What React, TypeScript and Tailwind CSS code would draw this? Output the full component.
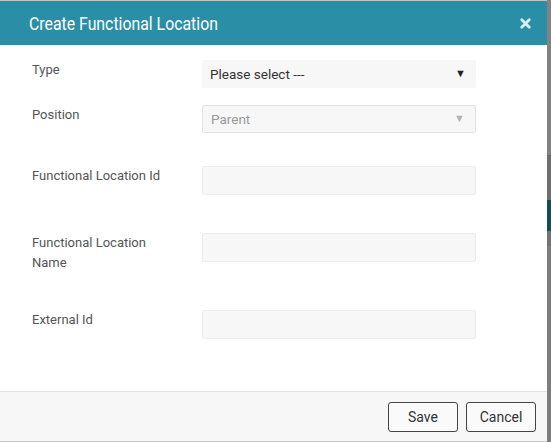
import { X } from 'lucide-react'

interface FieldRowProps {
    label: string
    height: string
    children: React.ReactNode
}

function FieldRow({ label, height, children }: FieldRowProps) {
    return (
        <div className={`flex items-start ${height}`}>
            <div className="w-[202px] shrink-0 pl-8 pr-[26px] text-[13px] leading-5 text-[#555]">{label}</div>
            <div className="w-[274px]">{children}</div>
        </div>
    )
}

function TextBox() {
    return <div className="h-[29px] rounded-[2px] border border-[#ededed] bg-[#f7f7f7]" />
}

export default function App() {
    return (
        <div className="flex h-[442px] w-[551px] bg-[#7d7d7d] font-['Roboto','Liberation_Sans',sans-serif]">
            {/* dialog */}
            <div className="flex w-[547px] shrink-0 flex-col border-t border-b border-[#c4c4c4] bg-white">
                <div className="flex h-[44px] shrink-0 items-center justify-between bg-[#2a8fa6] pl-[29px] pr-[14px]">
                    <h1 className="origin-left scale-x-[0.88] whitespace-nowrap text-[18px] text-white">Create Functional Location</h1>
                    <X className="h-[15px] w-[15px] text-[#d9eef2]" strokeWidth={4.5} />
                </div>

                <div className="flex-1 pt-[15px]">
                    <FieldRow label="Type" height="h-[45px]">
                        <div className="flex h-[28px] items-center justify-between rounded-[2px] bg-[#f7f7f7] pl-2 pr-[10px] text-[13.5px] text-[#333]">
                            <span>Please select ---</span>
                            <span className="text-[11px] text-[#222]">▼</span>
                        </div>
                    </FieldRow>
                    <FieldRow label="Position" height="h-[61px]">
                        <div className="flex h-[28px] items-center justify-between rounded-[2px] border border-[#e3e3e3] bg-[#f7f7f7] pl-2 pr-[10px] text-[13.5px] text-[#9a9a9a]">
                            <span>Parent</span>
                            <span className="text-[11px] text-[#b3b3b3]">▼</span>
                        </div>
                    </FieldRow>
                    <FieldRow label="Functional Location Id" height="h-[67px]">
                        <TextBox />
                    </FieldRow>
                    <FieldRow label="Functional Location Name" height="h-[77px]">
                        <TextBox />
                    </FieldRow>
                    <FieldRow label="External Id" height="h-[28px]">
                        <TextBox />
                    </FieldRow>
                </div>

                <div className="flex h-[50px] shrink-0 items-start justify-end gap-2 border-t border-[#e3e3e3] bg-[#f7f7f7] pt-[10px] pr-[11px]">
                    <button className="h-[30px] w-[70px] rounded-[3px] border border-[#444] bg-[#fafafa] text-[14px] text-[#333]">Save</button>
                    <button className="h-[30px] w-[70px] rounded-[3px] border border-[#444] bg-[#fafafa] text-[14px] text-[#333]">Cancel</button>
                </div>
            </div>

            {/* page behind the dialog */}
            <div className="flex flex-1 flex-col">
                <div className="h-[155px] bg-[#828282]" />
                <div className="h-[1px] bg-[#2a7f92]" />
                <div className="h-[44px] bg-[#6f6f6f]" />
                <div className="h-[31px] bg-[#0f4e5c]" />
                <div className="h-[15px] bg-[#737373]" />
                <div className="flex-1 bg-[#7d7d7d]" />
            </div>
        </div>
    )
}
